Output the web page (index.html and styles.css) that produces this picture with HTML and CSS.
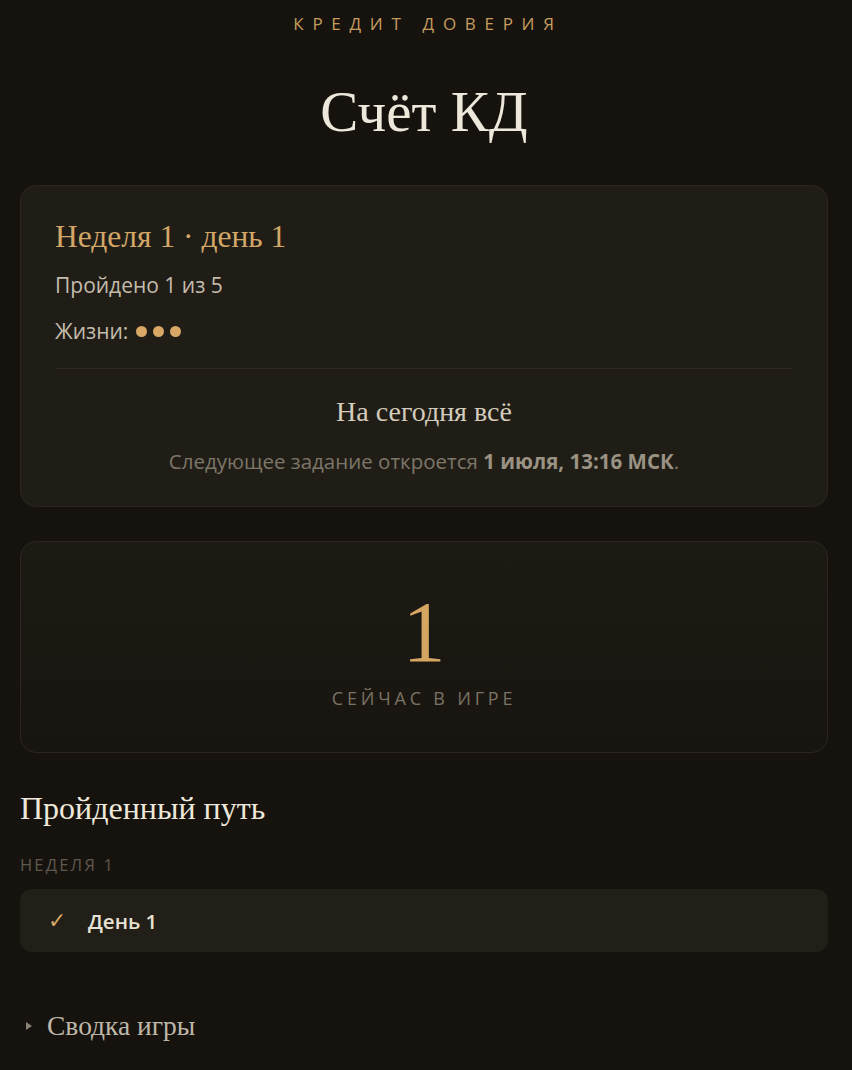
FILE: index.html
```html
<!DOCTYPE html>
<html lang="ru">
<head>
<meta charset="utf-8">
<title>Счёт КД</title>
<link rel="stylesheet" href="styles.css">
</head>
<body>
<main class="page">
  <header class="head">
    <div class="eyebrow">Кредит доверия</div>
    <h1 class="title">Счёт КД</h1>
  </header>

  <section class="card status">
    <h2 class="week">Неделя 1 · день 1</h2>
    <p class="meta">Пройдено 1 из 5</p>
    <p class="meta lives">Жизни: <span class="dots"><i></i><i></i><i></i></span></p>
    <div class="divider"></div>
    <div class="done">
      <h3 class="done-title">На сегодня всё</h3>
      <p class="done-text">Следующее задание откроется <b>1 июля, 13:16 МСК</b>.</p>
    </div>
  </section>

  <section class="card online">
    <div class="count">1</div>
    <div class="count-label">Сейчас в игре</div>
  </section>

  <section class="path">
    <h2 class="path-title">Пройденный путь</h2>
    <div class="week-label">Неделя 1</div>
    <div class="day-row"><span class="check">✓</span><span class="day">День 1</span></div>
  </section>

  <details class="summary">
    <summary><span class="tri"></span>Сводка игры</summary>
  </details>
</main>
</body>
</html>
```

FILE: styles.css
```css
* { box-sizing: border-box; }
html, body { margin: 0; padding: 0; }
body {
  background: #16130f;
  color: #e8e2d4;
  font-family: "Open Sans", "Noto Sans", sans-serif;
  min-height: 1070px;
}
.page {
  padding: 0 24px 40px 20px;
}
.head {
  text-align: center;
  padding-top: 12px;
}
.eyebrow {
  color: #c59c5e;
  font-size: 17px;
  letter-spacing: 8.7px;
  text-transform: uppercase;
  line-height: 24px;
  padding-left: 8px;
}
.title {
  margin: 44px 0 0;
  font-family: "Liberation Serif", "DejaVu Serif", serif;
  font-weight: 400;
  font-size: 57px;
  line-height: 64px;
  color: #eee8da;
}
.card {
  border-radius: 16px;
  border: 1px solid #2a261f;
}
.status {
  margin-top: 41px;
  background: #201d17;
  padding: 33px 34px 31px;
}
.week {
  margin: 0;
  font-family: "Liberation Serif", "DejaVu Serif", serif;
  font-weight: 400;
  font-size: 31.5px;
  line-height: 36px;
  color: #d3a767;
}
.meta {
  margin: 16px 0 0;
  font-size: 21px;
  line-height: 28px;
  color: #c4bcac;
}
.lives { margin-top: 18px; display: flex; align-items: center; gap: 8px; }
.dots { display: inline-flex; gap: 6px; }
.dots i {
  width: 11px; height: 11px; border-radius: 50%;
  background: #d9a867; display: block;
}
.divider {
  height: 1px;
  background: #2e2a23;
  margin: 23px 0 0 0;
}
.done { text-align: center; padding-top: 25px; }
.done-title {
  margin: 0;
  font-family: "Liberation Serif", "DejaVu Serif", serif;
  font-weight: 400;
  font-size: 28px;
  line-height: 36px;
  color: #d4ccbc;
}
.done-text {
  margin: 17px 0 0;
  font-size: 20.5px;
  line-height: 28px;
  color: #7d7667;
}
.done-text b { color: #9a9283; font-weight: 700; }

.online {
  margin-top: 34px;
  background: linear-gradient(180deg, #1d1a14 0%, #181510 100%);
  height: 212px;
  text-align: center;
  padding-top: 42px;
}
.count {
  font-family: "Liberation Serif", "DejaVu Serif", serif;
  font-size: 86px;
  line-height: 96px;
  color: #d4a662;
}
.count-label {
  margin-top: 5px;
  font-size: 18px;
  letter-spacing: 3.8px;
  text-transform: uppercase;
  color: #7a7264;
  line-height: 26px;
}

.path { margin-top: 37px; }
.path-title {
  margin: 0;
  font-family: "Liberation Serif", "DejaVu Serif", serif;
  font-weight: 400;
  font-size: 32px;
  line-height: 36px;
  color: #eee8da;
}
.week-label {
  margin-top: 28px;
  font-size: 16.5px;
  letter-spacing: 2.2px;
  text-transform: uppercase;
  color: #5f584d;
  line-height: 22px;
}
.day-row {
  margin-top: 13px;
  height: 63px;
  border-radius: 12px;
  background: #221e18;
  display: flex;
  align-items: center;
  padding-left: 28px;
  gap: 22px;
}
.check { color: #d4a662; font-size: 22px; font-family: "DejaVu Sans", sans-serif; font-weight: 300; }
.day { font-size: 20.5px; font-weight: 600; color: #e8e2d4; }

.summary { margin-top: 57px; }
.summary summary {
  list-style: none;
  display: flex;
  align-items: center;
  font-family: "Liberation Serif", "DejaVu Serif", serif;
  font-size: 27.5px;
  line-height: 34px;
  color: #bfb7a7;
  padding-left: 6px;
  cursor: pointer;
}
.summary summary::-webkit-details-marker { display: none; }
.tri {
  width: 0; height: 0;
  border-left: 6px solid #8a8274;
  border-top: 4px solid transparent;
  border-bottom: 4px solid transparent;
  margin-right: 15px;
}
```
